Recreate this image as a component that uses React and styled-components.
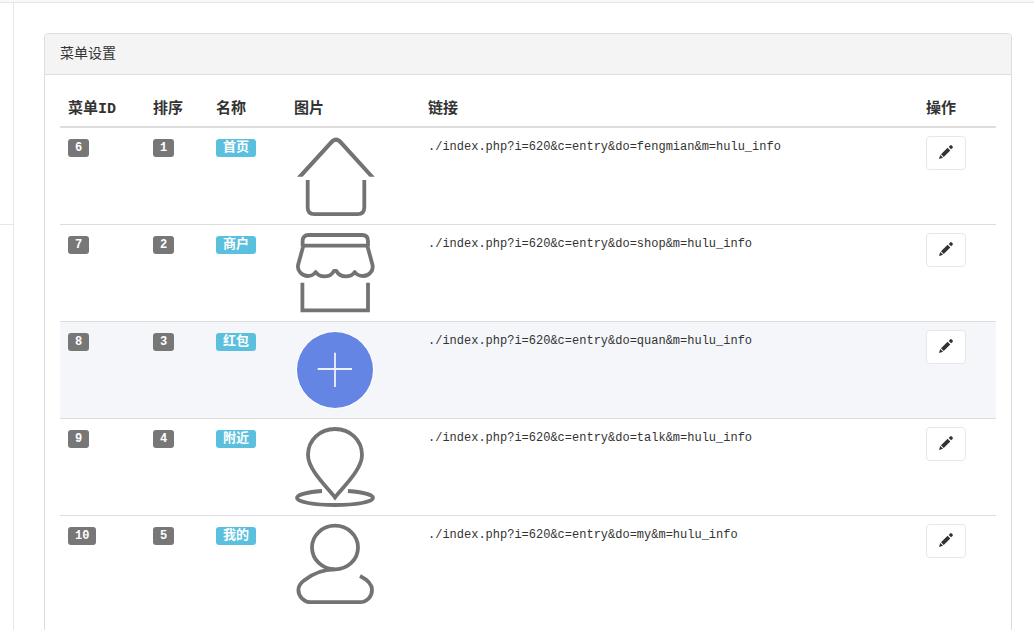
import React from "react";
import styled, { createGlobalStyle } from "styled-components";

const menus = [
  { id: 6, orden: 1, nombre: "首页", icono: "home", enlace: "fengmian" },
  { id: 7, orden: 2, nombre: "商户", icono: "shop", enlace: "shop" },
  { id: 8, orden: 3, nombre: "红包", icono: "plus", enlace: "quan" },
  { id: 9, orden: 4, nombre: "附近", icono: "pin", enlace: "talk" },
  { id: 10, orden: 5, nombre: "我的", icono: "user", enlace: "my" },
];

const dibujos = {
  home: (
    <>
      <path
        d="M3 40.7 36.6 4C40 .6 44 .6 47.4 4L80.7 40.7H75.4L45 7.4C43 5.2 41 5.2 39 7.4L8.6 40.7Z"
        fill="#737373"
        stroke="none"
      />
      <path d="M13.7 44V71.5Q13.7 78.2 20.4 78.2H63.6Q70.3 78.2 70.3 71.5V44" />
    </>
  ),
  shop: (
    <>
      <path d="M8.6 13V8Q8.6 2 14.6 2H68Q74 2 74 8V13M9 12.7H74" />
      <path
        strokeLinejoin="round"
        d="M9.3 13 4.2 31.5C2.6 37.5 8 43 13.7 43C17.5 43 20 41.5 21.7 39C23.5 41.8 26.5 43.4 30.6 43.4C35 43.4 38.5 41 40 37.8H42.2C44 41 47 43.4 51.6 43.4C56 43.4 59 41.8 60.8 39C62.5 41.5 65.3 43 69.2 43C75 43 80 37.5 78.4 31.5L73.4 13"
      />
      <path d="M8.4 49.7V77.4H74V49.7" />
    </>
  ),
  plus: (
    <>
      <circle cx="41" cy="40" r="39" fill="#fff" stroke="none" />
      <circle cx="41" cy="40" r="38" fill="#6585e5" stroke="none" />
      <path d="M23.7 39H58M41 22.7V57" stroke="#eef1fd" strokeWidth="1.8" />
    </>
  ),
  pin: (
    <>
      <path d="M41 70.5C31 58 14 42 14 28C14 13 26 2 41 2S68 13 68 28C68 42 51 58 41 70.5Z" />
      <path d="M28 64C14 65 3 67.5 3 71C3 75 20 78 41 78S79 75 79 71C79 67.5 68 65 54 64" />
    </>
  ),
  user: (
    <>
      <ellipse cx="41" cy="23.5" rx="23" ry="21.8" />
      <path d="M41 45.3C29 45.3 18 50 10 56.5C6 59.5 4.4 62 4.4 66C4.4 72.5 10 78.2 17 78.2H66C73 78.2 78 72.5 78 66C78 60 73 55.5 66 52" />
    </>
  ),
};

function Dibujo({ tipo }) {
  return (
    <Icono viewBox="0 0 80 80" aria-hidden="true">
      {dibujos[tipo]}
    </Icono>
  );
}

function Fila({ menu }) {
  const { id, orden, nombre, icono, enlace } = menu;
  return (
    <Row $activa={id === 8}>
      <Td>
        <Badge>{id}</Badge>
      </Td>
      <Td>
        <Badge>{orden}</Badge>
      </Td>
      <Td>
        <Badge $info>{nombre}</Badge>
      </Td>
      <Td>
        <Dibujo tipo={icono} />
      </Td>
      <Td>{`./index.php?i=620&c=entry&do=${enlace}&m=hulu_info`}</Td>
      <Td>
        <Boton type="button" aria-label={`编辑 ${nombre}`}>
          <svg width="14" height="14" viewBox="0 0 14 14" fill="#333">
            <path d="M0 14 1.2 9.9 4.1 12.8ZM2 9.3 8.6 2.8 11.3 5.5 4.7 12ZM9.7 1.9 11.1.5Q12 -.3 12.8.5L13.5 1.2Q14.3 2 13.5 2.9L12.1 4.3Z" />
          </svg>
        </Boton>
      </Td>
    </Row>
  );
}

function App() {
  return (
    <>
      <GlobalStyle />
      <Page>
        <TopBar />
        <Layout>
          <Sidebar>
            <SideGroup />
          </Sidebar>
          <Main>
            <Panel>
              <PanelTitle>菜单设置</PanelTitle>
              <PanelBody>
                <Table>
                  <thead>
                    <tr>
                      <Th $ancho="85px">菜单ID</Th>
                      <Th $ancho="63px">排序</Th>
                      <Th $ancho="78px">名称</Th>
                      <Th $ancho="134px">图片</Th>
                      <Th>链接</Th>
                      <Th $ancho="78px">操作</Th>
                    </tr>
                  </thead>
                  <tbody>
                    {menus.map((menu) => (
                      <Fila key={menu.id} menu={menu} />
                    ))}
                  </tbody>
                </Table>
              </PanelBody>
            </Panel>
          </Main>
        </Layout>
      </Page>
    </>
  );
}

export default App;

const GlobalStyle = createGlobalStyle`
  * {
    box-sizing: border-box;
  }
  body {
    margin: 0;
    background: #fff;
    color: #333;
    font-family: "Liberation Mono", "Noto Sans CJK SC", monospace;
    font-size: 12px;
    line-height: 22px;
  }
`;

const Page = styled.div`
  display: flex;
  flex-direction: column;
  height: 100vh;
`;

const TopBar = styled.header`
  flex: none;
  height: 3px;
  background: #f8f8f8;
  border-bottom: 1px solid #e7e7eb;
`;

const Layout = styled.div`
  display: flex;
  flex: 1;
  min-height: 0;
`;

const Sidebar = styled.aside`
  flex: none;
  width: 14px;
  border-right: 1px solid #e7e7eb;
`;

const SideGroup = styled.div`
  height: 222px;
  border-bottom: 1px solid #e7e7eb;
`;

const Main = styled.main`
  flex: 1;
  min-width: 0;
  padding: 30px 22px 0 30px;
  overflow-y: auto;
  scrollbar-width: none;
`;

const Panel = styled.section`
  border: 1px solid #ddd;
  border-radius: 4px;
`;

const PanelTitle = styled.h1`
  margin: 0;
  padding: 9px 15px;
  font-size: 14px;
  font-weight: 400;
  line-height: 22px;
  background: #f4f4f4;
  border-bottom: 1px solid #ddd;
  border-radius: 3px 3px 0 0;
`;

const PanelBody = styled.div`
  padding: 15px;
`;

const Table = styled.table`
  width: 100%;
  margin-bottom: 20px;
  table-layout: fixed;
  border-collapse: collapse;
`;

const Th = styled.th`
  width: ${(props) => props.$ancho || "auto"};
  padding: 9px 8px 5px;
  font-size: 15px;
  font-weight: 700;
  text-align: left;
  white-space: nowrap;
  border-bottom: 2px solid #ddd;
`;

const Row = styled.tr`
  background: ${(props) => (props.$activa ? "#f4f6fa" : "none")};
`;

const Td = styled.td`
  padding: 8px;
  vertical-align: top;
  border-top: 1px solid #ddd;
`;

const Badge = styled.span`
  display: inline-block;
  margin-top: 3px;
  padding: 0 7px;
  font-size: ${(props) => (props.$info ? "13px" : "12px")};
  font-weight: 700;
  line-height: 18px;
  vertical-align: top;
  color: #fff;
  background: ${(props) => (props.$info ? "#5bc0de" : "#777")};
  border-radius: 3px;
`;

const Icono = styled.svg`
  display: block;
  width: 80px;
  height: 80px;
  overflow: visible;
  fill: none;
  stroke: #737373;
  stroke-width: 3.8;
`;

const Boton = styled.button`
  display: flex;
  align-items: center;
  justify-content: center;
  width: 40px;
  height: 34px;
  padding: 0 0 2px;
  background: #fff;
  border: 1px solid #e7e7eb;
  border-radius: 4px;
  cursor: pointer;
`;
